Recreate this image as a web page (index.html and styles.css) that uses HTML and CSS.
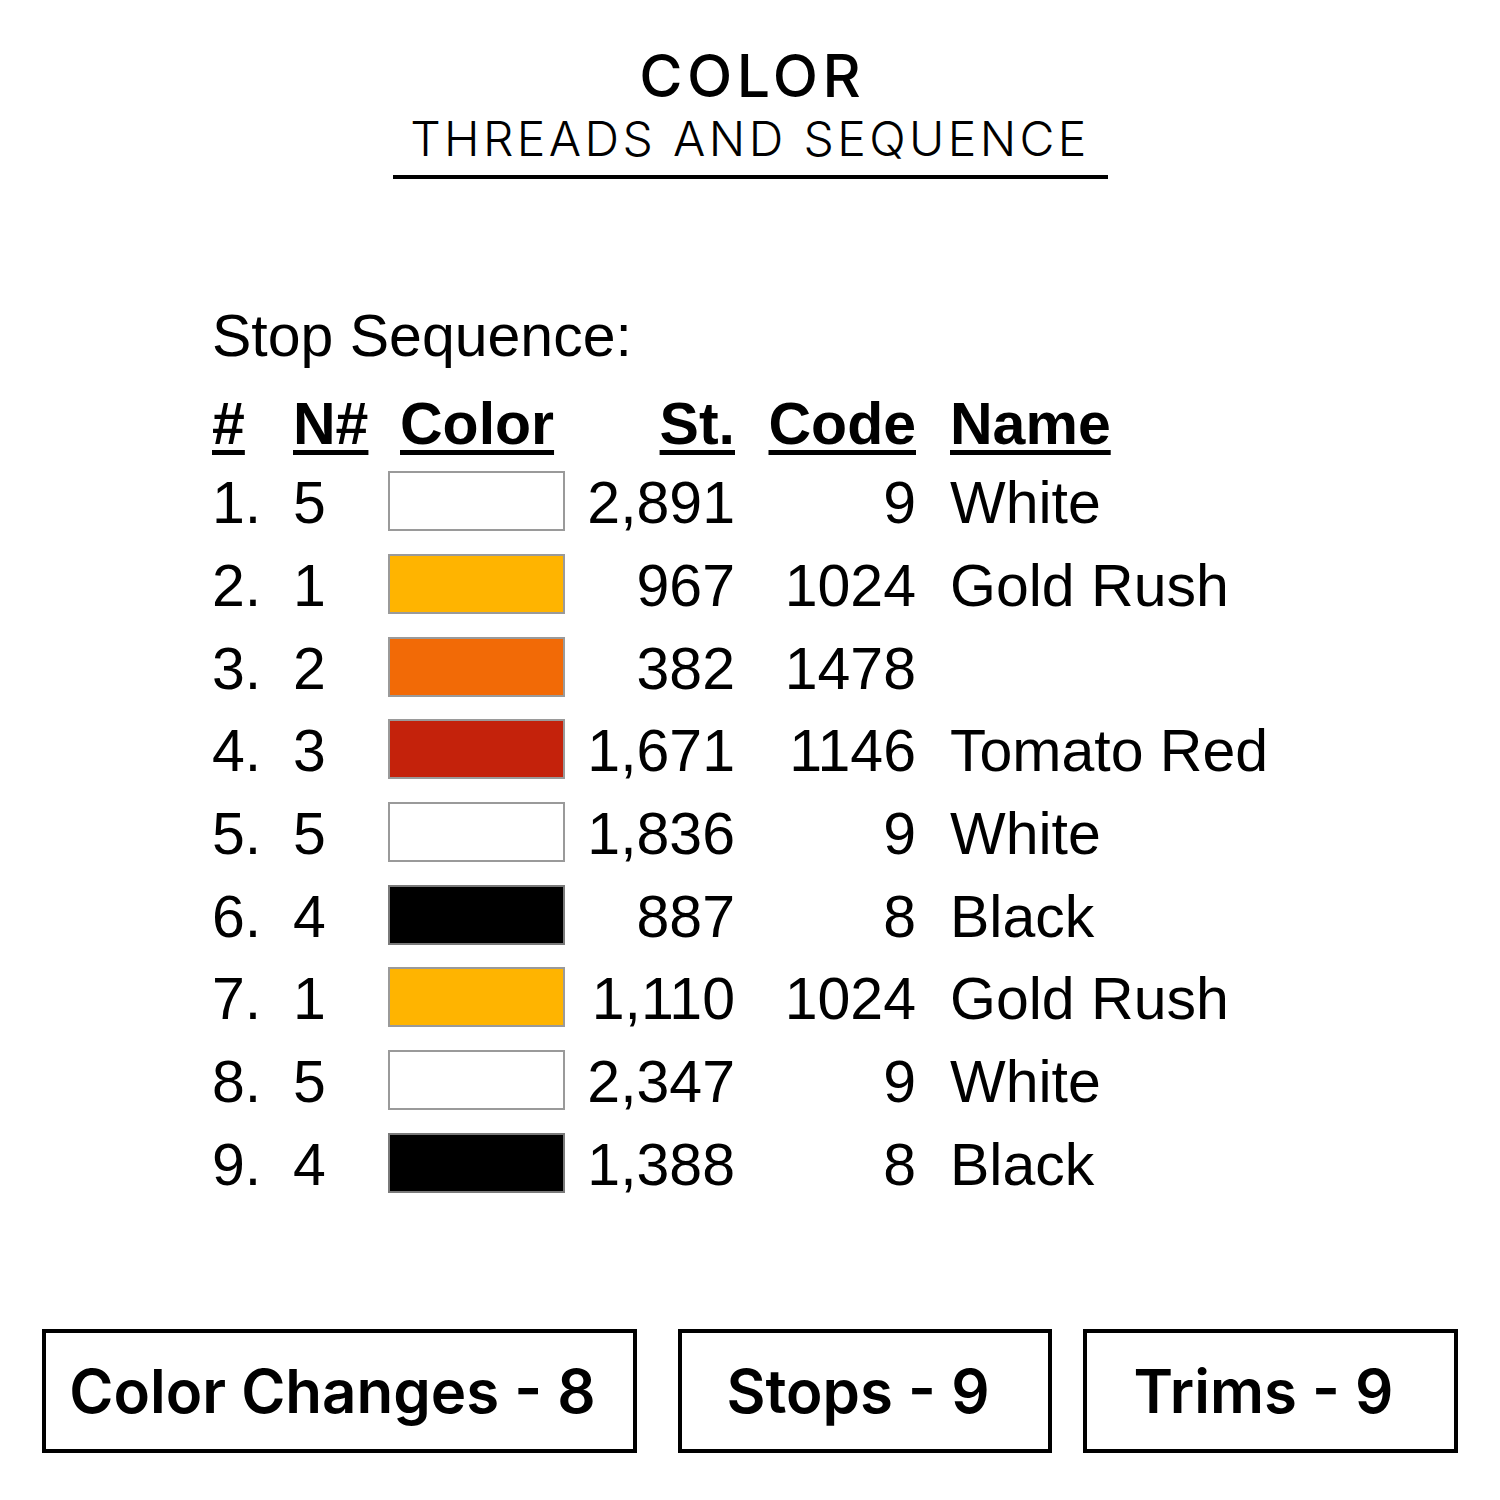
FILE: index.html
```html
<!DOCTYPE html>
<html>
<head>
<meta charset="utf-8">
<link rel="stylesheet" href="styles.css">
</head>
<body>
<div class="page">
  <header class="head">
    <div class="title">COLOR</div>
    <div class="subtitle">THREADS AND SEQUENCE</div>
  </header>

  <section class="seq">
    <div class="seq-title">Stop Sequence:</div>
    <div class="grid">
      <div class="th"><u>#</u></div>
      <div class="th"><u>N#</u></div>
      <div class="th th-color"><u>Color</u></div>
      <div class="th num"><u>St.</u></div>
      <div class="th num"><u>Code</u></div>
      <div class="th name"><u>Name</u></div>

      <div>1.</div><div>5</div><div class="sw"><span class="swatch white"></span></div><div class="num">2,891</div><div class="num">9</div><div class="name">White</div>
      <div>2.</div><div>1</div><div class="sw"><span class="swatch gold"></span></div><div class="num">967</div><div class="num">1024</div><div class="name">Gold Rush</div>
      <div>3.</div><div>2</div><div class="sw"><span class="swatch orange"></span></div><div class="num">382</div><div class="num">1478</div><div class="name"></div>
      <div>4.</div><div>3</div><div class="sw"><span class="swatch red"></span></div><div class="num">1,671</div><div class="num">1146</div><div class="name">Tomato Red</div>
      <div>5.</div><div>5</div><div class="sw"><span class="swatch white"></span></div><div class="num">1,836</div><div class="num">9</div><div class="name">White</div>
      <div>6.</div><div>4</div><div class="sw"><span class="swatch black"></span></div><div class="num">887</div><div class="num">8</div><div class="name">Black</div>
      <div>7.</div><div>1</div><div class="sw"><span class="swatch gold"></span></div><div class="num">1,110</div><div class="num">1024</div><div class="name">Gold Rush</div>
      <div>8.</div><div>5</div><div class="sw"><span class="swatch white"></span></div><div class="num">2,347</div><div class="num">9</div><div class="name">White</div>
      <div>9.</div><div>4</div><div class="sw"><span class="swatch black"></span></div><div class="num">1,388</div><div class="num">8</div><div class="name">Black</div>
    </div>
  </section>

  <footer class="stats">
    <div class="box box-wide">Color Changes - 8</div>
    <div class="box box-mid">Stops - 9</div>
    <div class="box box-end">Trims - 9</div>
  </footer>
</div>
</body>
</html>
```

FILE: styles.css
```css
html, body {
  margin: 0;
  padding: 0;
  background: #ffffff;
}

.page {
  width: 1500px;
  height: 1500px;
  position: relative;
  color: #000;
}

.head {
  display: flex;
  flex-direction: column;
  align-items: center;
  padding-top: 41px;
}

.title {
  font-family: Inter, "Noto Sans", sans-serif;
  font-weight: 500;
  font-size: 59px;
  line-height: 70px;
  letter-spacing: 4.5px;
  margin-right: -4.5px;
}

.subtitle {
  font-family: Inter, "Noto Sans", sans-serif;
  font-weight: 300;
  font-size: 48px;
  line-height: 56px;
  width: 715px;
  text-align: center;
  border-bottom: 4px solid #000;
  padding-bottom: 8px;
  letter-spacing: 3.4px;
}

.seq {
  font-family: "Liberation Sans", Arial, sans-serif;
  font-size: 59px;
  padding-left: 212px;
  margin-top: 122px;
}

.seq-title {
  line-height: 70px;
}

.grid {
  display: grid;
  grid-template-columns: 81px 95px 177px 170px 181px auto;
  grid-template-rows: 76px;
  grid-auto-rows: 82.7px;
  align-items: center;
  margin-top: 15px;
}

.grid > div {
  white-space: nowrap;
  line-height: 66px;
}

.th {
  font-weight: bold;
}

.th u {
  text-decoration-thickness: 5px;
  text-underline-offset: 6px;
}

.th-color {
  padding-left: 12px;
}

.num {
  text-align: right;
}

.name {
  padding-left: 34px;
}

.sw {
  display: flex;
  align-items: center;
  padding-bottom: 4px;
}

.swatch {
  display: block;
  box-sizing: border-box;
  width: 177px;
  height: 60px;
  border: 2px solid #9a9a9a;
}

.white { background: #ffffff; }
.gold { background: #ffb400; }
.orange { background: #f26a06; }
.red { background: #c4220b; }
.black { background: #000000; border-color: #7a7a7a; }

.stats {
  position: absolute;
  left: 42px;
  top: 1329px;
  display: flex;
}

.box {
  box-sizing: border-box;
  height: 124px;
  border: 4px solid #000;
  display: flex;
  align-items: center;
  justify-content: center;
  font-family: Inter, "Noto Sans", sans-serif;
  font-weight: 600;
  font-size: 60px;
  letter-spacing: 0px;
  padding-right: 14px;
}

.box-wide { width: 595px; }
.box-mid { width: 374px; margin-left: 41px; }
.box-end { width: 375px; margin-left: 31px; }
```
